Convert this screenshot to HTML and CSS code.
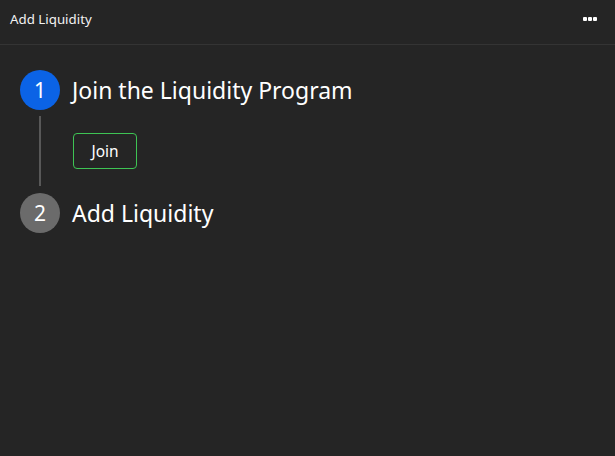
FILE: index.html
```html
<!DOCTYPE html>
<html>
<head>
<meta charset="utf-8">
<link rel="stylesheet" href="styles.css">
</head>
<body>
<div class="panel">
  <header class="header">
    <span class="title">Add Liquidity</span>
    <span class="more" aria-label="More"><i></i><i></i><i></i></span>
  </header>
  <main class="steps">
    <div class="step">
      <div class="badge active">1</div>
      <div class="step-title">Join the Liquidity Program</div>
    </div>
    <div class="step-body">
      <div class="rail"><div class="line"></div></div>
      <div class="content">
        <button class="btn">Join</button>
      </div>
    </div>
    <div class="step">
      <div class="badge">2</div>
      <div class="step-title">Add Liquidity</div>
    </div>
  </main>
</div>
</body>
</html>
```
FILE: styles.css
```css
* { box-sizing: border-box; }
html, body { margin: 0; padding: 0; }
body {
  width: 615px;
  height: 456px;
  background: #252525;
  color: #ffffff;
  font-family: "Noto Sans", "Open Sans", sans-serif;
  overflow: hidden;
}
.panel { height: 456px; display: flex; flex-direction: column; }
.header {
  height: 45px;
  border-bottom: 1px solid #343434;
  display: flex;
  align-items: center;
  justify-content: space-between;
  padding: 0 18px 0 10px;
}
.title { font-size: 13.3px; color: #f2f2f2; margin-top: -7px; }
.more { display: flex; gap: 1px; margin-top: -7px; }
.more i { width: 4px; height: 4px; background: #fff; border-radius: 1px; display: block; }
.steps { padding: 25px 20px 0 20px; display: flex; flex-direction: column; }
.step { display: flex; align-items: center; gap: 12px; height: 40px; }
.badge {
  width: 40px; height: 40px; border-radius: 50%;
  background: #6b6b6b; color: #fff;
  display: flex; align-items: center; justify-content: center;
  font-size: 21px; flex: none;
}
.badge.active { background: #0b63e6; }
.step-title { font-size: 23px; color: #fff; }
.step-body { display: flex; height: 83px; }
.rail { width: 40px; display: flex; justify-content: center; padding: 6px 0 7px; flex: none; }
.line { width: 2px; background: #585858; }
.content { padding: 23px 0 0 13px; }
.btn {
  height: 36px; width: 64px;
  background: transparent;
  border: 1px solid #3ec454;
  border-radius: 4px;
  color: #fff;
  font-family: inherit;
  font-size: 15.5px;
  padding: 0;
}
```
